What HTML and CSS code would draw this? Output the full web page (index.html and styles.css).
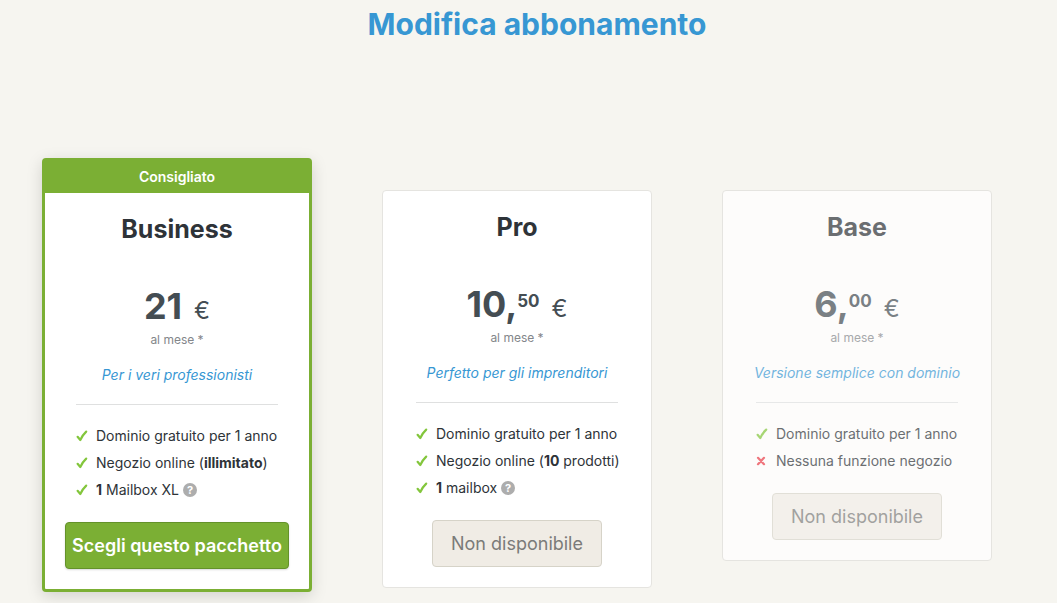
FILE: index.html
```html
<!DOCTYPE html>
<html lang="it">
<head>
    <meta charset="UTF-8">
    <meta name="viewport" content="width=device-width, initial-scale=1.0">
    <title>Modifica abbonamento</title>
    <link rel="stylesheet" href="styles.css">
</head>
<body>
    <!-- Shared icons -->
    <svg class="sprite" aria-hidden="true">
        <symbol id="check" viewBox="0 0 12 12">
            <path d="M1.6 6.8 L4.3 10 C5.8 6.8 7.6 4 10.2 1.6" fill="none" stroke="#83c63c" stroke-width="2.2" stroke-linecap="round" stroke-linejoin="round"/>
        </symbol>
        <symbol id="cross" viewBox="0 0 12 12">
            <path d="M2 2.8 L8 9.2 M8 2.8 L2 9.2" fill="none" stroke="#ea3d48" stroke-width="2.2" stroke-linecap="round"/>
        </symbol>
    </svg>

    <main class="page">
        <h1 class="page-title">Modifica abbonamento</h1>

        <div class="plans">
            <section class="plan featured">
                <div class="badge">Consigliato</div>
                <div class="plan-body">
                    <h2 class="plan-name">Business</h2>
                    <div class="price"><span class="amount">21</span><span class="currency">€</span></div>
                    <p class="period">al mese *</p>
                    <p class="tagline">Per i veri professionisti</p>
                    <ul class="features">
                        <li><svg class="icon"><use href="#check"/></svg><span>Dominio gratuito per 1 anno</span></li>
                        <li><svg class="icon"><use href="#check"/></svg><span>Negozio online (<b>illimitato</b>)</span></li>
                        <li><svg class="icon"><use href="#check"/></svg><span><b>1</b> Mailbox XL</span><button class="help" type="button">?</button></li>
                    </ul>
                    <button class="btn btn-primary" type="button">Scegli questo pacchetto</button>
                </div>
            </section>

            <section class="plan">
                <div class="plan-body">
                    <h2 class="plan-name">Pro</h2>
                    <div class="price"><span class="amount">10,</span><span class="cents">50</span><span class="currency">€</span></div>
                    <p class="period">al mese *</p>
                    <p class="tagline">Perfetto per gli imprenditori</p>
                    <ul class="features">
                        <li><svg class="icon"><use href="#check"/></svg><span>Dominio gratuito per 1 anno</span></li>
                        <li><svg class="icon"><use href="#check"/></svg><span>Negozio online (<b>10</b> prodotti)</span></li>
                        <li><svg class="icon"><use href="#check"/></svg><span><b>1</b> mailbox</span><button class="help" type="button">?</button></li>
                    </ul>
                    <button class="btn" type="button" disabled>Non disponibile</button>
                </div>
            </section>

            <section class="plan faded">
                <div class="plan-body">
                    <h2 class="plan-name">Base</h2>
                    <div class="price"><span class="amount">6,</span><span class="cents">00</span><span class="currency">€</span></div>
                    <p class="period">al mese *</p>
                    <p class="tagline">Versione semplice con dominio</p>
                    <ul class="features">
                        <li><svg class="icon"><use href="#check"/></svg><span>Dominio gratuito per 1 anno</span></li>
                        <li><svg class="icon"><use href="#cross"/></svg><span>Nessuna funzione negozio</span></li>
                    </ul>
                    <button class="btn" type="button" disabled>Non disponibile</button>
                </div>
            </section>
        </div>
    </main>
</body>
</html>
```
FILE: styles.css
```css
* {
    margin: 0;
    padding: 0;
    box-sizing: border-box;
}

body {
    background: #f6f5f0;
    color: #2e3338;
    font-family: Inter, "Open Sans", sans-serif;
    font-size: 14px;
}

.sprite {
    position: absolute;
    width: 0;
    height: 0;
}

.page {
    padding: 4px 0 11px 17px;
}

.page-title {
    color: #3797d3;
    font-size: 30px;
    font-weight: 700;
    line-height: 40px;
    text-align: center;
}

/* Plans */
.plans {
    display: grid;
    grid-template-columns: repeat(3, minmax(0, 1fr));
    gap: 70px;
    align-items: start;
    margin-top: 114px;
    padding: 0 65px 0 25px;
}

.plan {
    margin-top: 32px;
    background: #fff;
    border: 1px solid #e5e4e0;
    border-radius: 4px;
    text-align: center;
}

.plan.featured {
    margin-top: 0;
    border: 3px solid #7baf34;
    box-shadow: 0 4px 16px rgba(0, 0, 0, 0.15);
}

.badge {
    background: #7baf34;
    color: #fff;
    font-weight: 600;
    line-height: 32px;
}

.plan-body {
    display: flex;
    flex-direction: column;
    align-items: center;
    padding: 20px 0;
}

.plan.faded {
    background: #fdfcfb;
}

.faded .plan-body > * {
    opacity: 0.7;
}

.plan-name {
    font-size: 25px;
    font-weight: 700;
    line-height: 32px;
}

.price {
    display: flex;
    justify-content: center;
    align-items: baseline;
    height: 40px;
    margin-top: 41px;
    color: #444d53;
    line-height: 40px;
}

.amount {
    font-size: 36px;
    font-weight: 700;
}

.cents {
    align-self: flex-start;
    font-size: 17px;
    font-weight: 700;
    line-height: 34px;
}

.currency {
    margin-left: 12px;
    font-size: 24px;
}

.period {
    margin-top: 6px;
    color: #83868a;
    font-size: 12px;
    line-height: 16px;
}

.tagline {
    margin-top: 17px;
    color: #3797d3;
    font-style: italic;
    line-height: 20px;
    white-space: nowrap;
}

.features {
    align-self: stretch;
    margin: 19px 33px 0;
    padding-top: 17px;
    border-top: 1px solid #dfe0e0;
    list-style: none;
    text-align: left;
}

.featured .features {
    margin: 19px 31px 0;
}

.features li {
    display: flex;
    align-items: center;
    height: 27px;
    white-space: nowrap;
}

.icon {
    flex: none;
    width: 12px;
    height: 12px;
    margin-right: 8px;
}

.help {
    width: 14px;
    height: 14px;
    margin-left: 4px;
    background: #adadad;
    border: 0;
    border-radius: 50%;
    color: #fff;
    font: 700 11px/14px Inter, sans-serif;
    cursor: pointer;
}

/* Buttons */
.btn {
    height: 47px;
    margin-top: 19px;
    padding: 0 18px;
    background: #f0ece5;
    border: 1px solid #d6d3c8;
    border-radius: 4px;
    color: #7b7b79;
    font-family: inherit;
    font-size: 18px;
    white-space: nowrap;
}

.btn-primary {
    padding: 0 6px;
    background: #7baf34;
    border-color: #64922a;
    box-shadow: 0 1px 2px rgba(0, 0, 0, 0.15);
    color: #fff;
    font-weight: 600;
    cursor: pointer;
}
```
